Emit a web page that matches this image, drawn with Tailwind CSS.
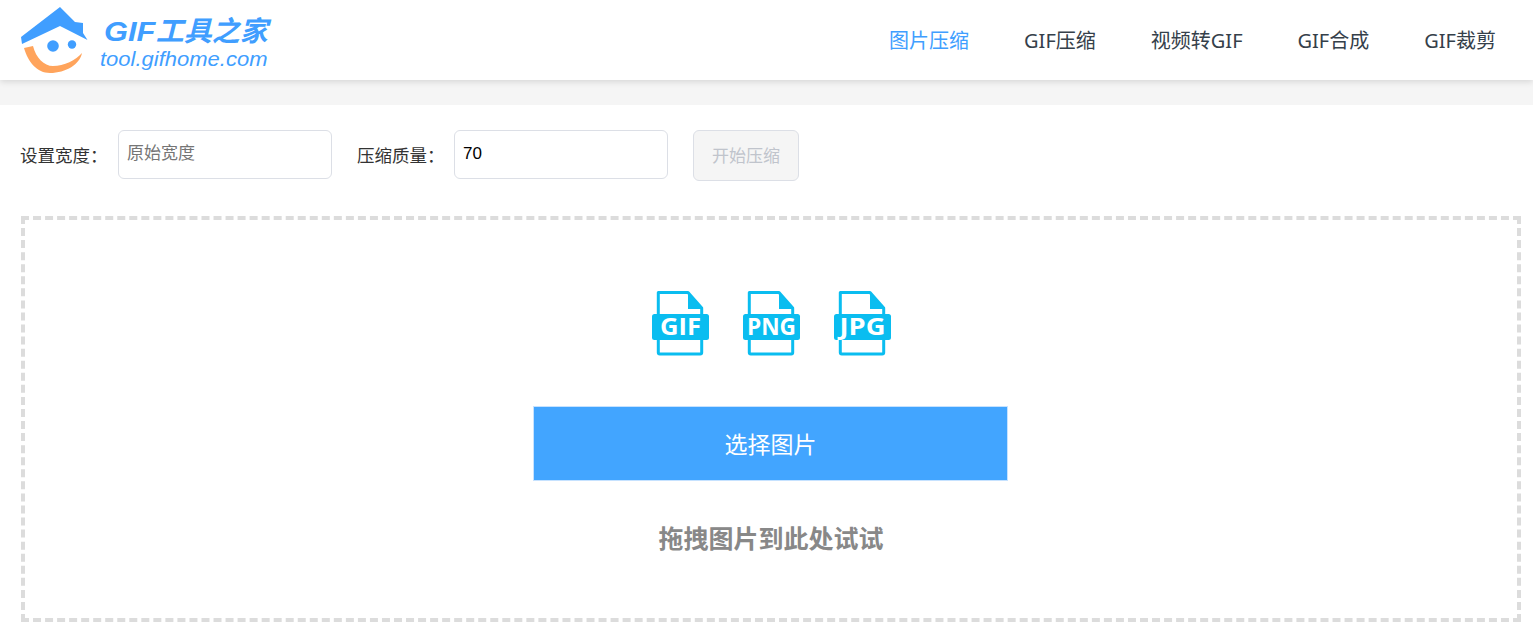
<!DOCTYPE html>
<html lang="zh">
<head>
<meta charset="utf-8">
<script src="https://cdn.jsdelivr.net/npm/@tailwindcss/browser@4"></script>
<title>GIF工具之家</title>
</head>
<body class="bg-white h-[637px] overflow-hidden font-['Liberation_Sans','Noto_Sans_CJK_SC',sans-serif] text-[#333]">
<header class="h-20 flex items-center justify-between bg-white shadow-[0_2px_6px_rgba(0,0,0,0.12)] relative pl-5 pr-[37px]">
  <div class="flex items-center h-20">
    <svg width="70" height="80" viewBox="20 0 70 80">
      <path d="M60 7 L75 22 L83 23 L83 33 L87.5 40 L60 26 L22 44 L21 37 Z" fill="#409eff"/>
      <circle cx="53" cy="46" r="5.8" fill="#409eff"/>
      <circle cx="72" cy="44.5" r="4.2" fill="#409eff"/>
      <path d="M24 48 L33 46 C36 58 44 66 53 66 C64 66 76 60 82 53 C80 64 66 73 50 73 C37 73 28 62 24 48 Z" fill="#ffa45c"/>
    </svg>
    <div class="ml-[10px] mt-[6px] text-[#409eff] italic">
      <div class="text-[28px] leading-[32px] font-bold ml-[4px] whitespace-nowrap"><span class="inline-block scale-x-110 origin-left mr-[5px]">GIF</span>工具之家</div>
      <div class="text-[20px] leading-[22px] whitespace-nowrap scale-x-110 origin-left">tool.gifhome.com</div>
    </div>
  </div>
  <nav class="flex items-center gap-[55px] text-[20px] mt-[2px] text-[#35404a] font-['Noto_Sans','Noto_Sans_CJK_SC',sans-serif]">
    <a class="text-[#409eff]">图片压缩</a>
    <a>GIF压缩</a>
    <a>视频转GIF</a>
    <a>GIF合成</a>
    <a>GIF裁剪</a>
  </nav>
</header>
<div class="h-[25px] bg-[#f5f5f5]"></div>
<main class="pt-[25px] pl-[21px] pr-3">
  <div class="flex items-start text-[17.5px]">
    <label class="mt-[16px] w-[97px] leading-[20px] whitespace-nowrap -indent-px">设置宽度：</label>
    <input placeholder="原始宽度" class="w-[214px] h-[49px] border border-[#dcdfe6] rounded-[6px] px-2 pb-[2px] text-[17px] text-black placeholder:text-[#757575]">
    <label class="mt-[16px] ml-[25px] w-[97px] leading-[20px] whitespace-nowrap">压缩质量：</label>
    <input value="70" class="w-[214px] h-[49px] border border-[#dcdfe6] rounded-[6px] px-2 pb-[2px] text-[17px] text-black">
    <button class="ml-[25px] w-[106px] h-[51px] border border-[#dcdfe6] rounded-[6px] bg-[#f5f5f5] text-[#c0c4cc] text-[17px] pt-[3px]">开始压缩</button>
  </div>
  <section class="mt-[35px] w-[1500px] h-[406px] border-4 border-dashed border-[#dcdcdc] flex flex-col items-center">
    <div class="flex gap-[33px] mt-[71px] h-[65px] ml-[1px]">
      <svg width="58" height="65" viewBox="0 0 58 65"><path d="M6.300 1.500 H36 L49.700 17 V61.500 Q49.700 63 48.200 63 H7.800 Q6.300 63 6.300 61.500 Z" fill="#fff" stroke="#0abdf0" stroke-width="3" stroke-linejoin="round"/><path d="M36 2 L50 17 Q50 18 49 18 H36 Z" fill="#0abdf0"/><rect x="0" y="23" width="57" height="26" rx="2.500" fill="#0abdf0"/><text x="28.500" y="44" text-anchor="middle" fill="#fff" font-family="Open Sans, Noto Sans, sans-serif" font-weight="700" font-size="23" textLength="41" lengthAdjust="spacingAndGlyphs">GIF</text></svg>
      <svg width="58" height="65" viewBox="0 0 58 65"><path d="M6.300 1.500 H36 L49.700 17 V61.500 Q49.700 63 48.200 63 H7.800 Q6.300 63 6.300 61.500 Z" fill="#fff" stroke="#0abdf0" stroke-width="3" stroke-linejoin="round"/><path d="M36 2 L50 17 Q50 18 49 18 H36 Z" fill="#0abdf0"/><rect x="0" y="23" width="57" height="26" rx="2.500" fill="#0abdf0"/><text x="28.500" y="44" text-anchor="middle" fill="#fff" font-family="Open Sans, Noto Sans, sans-serif" font-weight="700" font-size="23" textLength="49" lengthAdjust="spacingAndGlyphs">PNG</text></svg>
      <svg width="58" height="65" viewBox="0 0 58 65"><path d="M6.300 1.500 H36 L49.700 17 V61.500 Q49.700 63 48.200 63 H7.800 Q6.300 63 6.300 61.500 Z" fill="#fff" stroke="#0abdf0" stroke-width="3" stroke-linejoin="round"/><path d="M36 2 L50 17 Q50 18 49 18 H36 Z" fill="#0abdf0"/><rect x="0" y="23" width="57" height="26" rx="2.500" fill="#0abdf0"/><text x="28.500" y="44" text-anchor="middle" fill="#fff" font-family="Open Sans, Noto Sans, sans-serif" font-weight="700" font-size="23" textLength="46" lengthAdjust="spacingAndGlyphs">JPG</text></svg>
    </div>
    <button class="mt-[50px] mr-[1px] w-[475px] h-[75px] border border-[#c6e2ff] bg-[#42a5ff] text-white text-[23px] pt-[3px]">选择图片</button>
    <p class="mt-[40px] text-[25px] leading-[36px] font-bold text-[#888]">拖拽图片到此处试试</p>
  </section>
</main>
</body>
</html>
